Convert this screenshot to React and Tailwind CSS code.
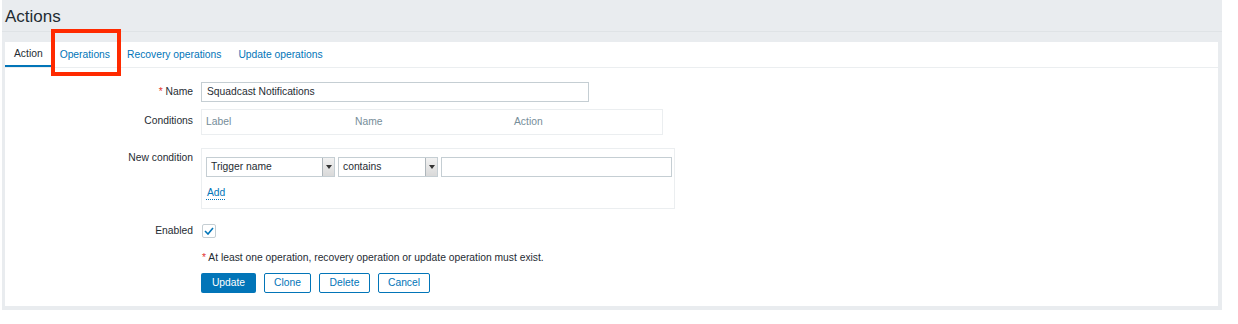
import React from "react";

function Select({ label, width }) {
  return (
    <div
      className="flex h-[20px] items-stretch border border-[#c5ced3] bg-white"
      style={{ width }}
    >
      <div className="flex flex-1 items-center pl-[4px] text-[10.3px] text-[#1f2c33]">{label}</div>
      <div className="flex w-[12px] items-center justify-center border-l border-[#aeb6bb] bg-gradient-to-b from-[#f2f2f2] to-[#d9d9d9]">
        <svg width="6" height="4" viewBox="0 0 6 4">
          <path d="M0 0 L6 0 L3 4 Z" fill="#333" />
        </svg>
      </div>
    </div>
  );
}

export default function App() {
  return (
    <div
      className="h-[324px] w-[1238px] bg-white"
      style={{ fontFamily: '"Liberation Sans", Arial, sans-serif' }}
    >
      <div className="ml-[2px] h-[310px] w-[1220px] bg-[#e9ecef]">
        <div className="flex h-[32px] items-start border-b border-[#dfe3e6] pl-[3px] pt-[7px] text-[17px] leading-[20px] text-[#1f2c33]">
          Actions
        </div>
        <div className="ml-[3px] mt-[10px] flex h-[264px] w-[1213px] flex-col bg-white">
          {/* tabs */}
          <div className="relative flex h-[26px] items-stretch border-b border-[#ebeef0] text-[10.3px] leading-[12px]">
            <div className="flex items-center border-b-2 border-[#0275b8] px-[9px] pt-[1px] text-[#1f2c33]">Action</div>
            <div className="flex items-center pl-[8px] pr-[9px] pt-[1px] text-[#0275b8]">Operations</div>
            <div className="flex items-center pl-[8px] pr-[9px] pt-[1px] text-[#0275b8]">Recovery operations</div>
            <div className="flex items-center px-[8px] pt-[1px] text-[#0275b8]">Update operations</div>
            <div className="absolute left-[46px] top-[-13px] h-[47px] w-[70px] border-[4px] border-[#ff2a00]" />
          </div>

          {/* form */}
          <div className="flex flex-col text-[10.3px] leading-[12px] text-[#1f2c33]">
            <div className="mt-[14px] flex items-center">
              <div className="w-[188px] text-right">
                <span className="text-[#e33734]">*</span> Name
              </div>
              <div className="ml-[8px] flex h-[20px] w-[388px] items-center border border-[#c5ced3] pl-[5px]">
                Squadcast Notifications
              </div>
            </div>

            <div className="mt-[7px] flex items-start">
              <div className="w-[188px] pt-[6px] text-right">Conditions</div>
              <div className="ml-[8px] flex h-[26px] w-[462px] items-center border border-[#ebeef0] text-[#768d99]">
                <div className="w-[153px] pl-[4px]">Label</div>
                <div className="w-[159px]">Name</div>
                <div>Action</div>
              </div>
            </div>

            <div className="mt-[13px] flex items-start">
              <div className="w-[188px] pt-[4px] text-right">New condition</div>
              <div className="ml-[8px] flex h-[61px] w-[474px] flex-col border border-[#ebeef0] pl-[4px] pt-[8px]">
                <div className="flex gap-[3px]">
                  <Select label="Trigger name" width={129} />
                  <Select label="contains" width={100} />
                  <div className="h-[20px] w-[231px] border border-[#c5ced3]" />
                </div>
                <div className="mt-[10px]">
                  <span className="border-b border-dotted border-[#0275b8] pl-[1px] pb-[1px] text-[#0275b8]">Add</span>
                </div>
              </div>
            </div>

            <div className="mt-[15px] flex items-center">
              <div className="w-[188px] text-right">Enabled</div>
              <div className="ml-[9px] flex h-[14px] w-[14px] items-center justify-center rounded-[2px] border border-[#c5ced3]">
                <svg width="10" height="8" viewBox="0 0 10 8">
                  <path d="M1 4 L4 7 L9 1" fill="none" stroke="#0275b8" strokeWidth="1.6" />
                </svg>
              </div>
            </div>

            <div className="ml-[197px] mt-[14px]">
              <span className="text-[#e33734]">*</span> At least one operation, recovery operation or update operation must exist.
            </div>

            <div className="ml-[196px] mt-[9px] flex gap-[8px]">
              <div className="flex h-[20px] w-[55px] items-center justify-center rounded-[2px] bg-[#0275b8] text-white">Update</div>
              <div className="flex h-[20px] w-[47px] items-center justify-center rounded-[2px] border border-[#0275b8] text-[#0275b8]">Clone</div>
              <div className="flex h-[20px] w-[51px] items-center justify-center rounded-[2px] border border-[#0275b8] text-[#0275b8]">Delete</div>
              <div className="flex h-[20px] w-[52px] items-center justify-center rounded-[2px] border border-[#0275b8] text-[#0275b8]">Cancel</div>
            </div>
          </div>
        </div>
      </div>
    </div>
  );
}
